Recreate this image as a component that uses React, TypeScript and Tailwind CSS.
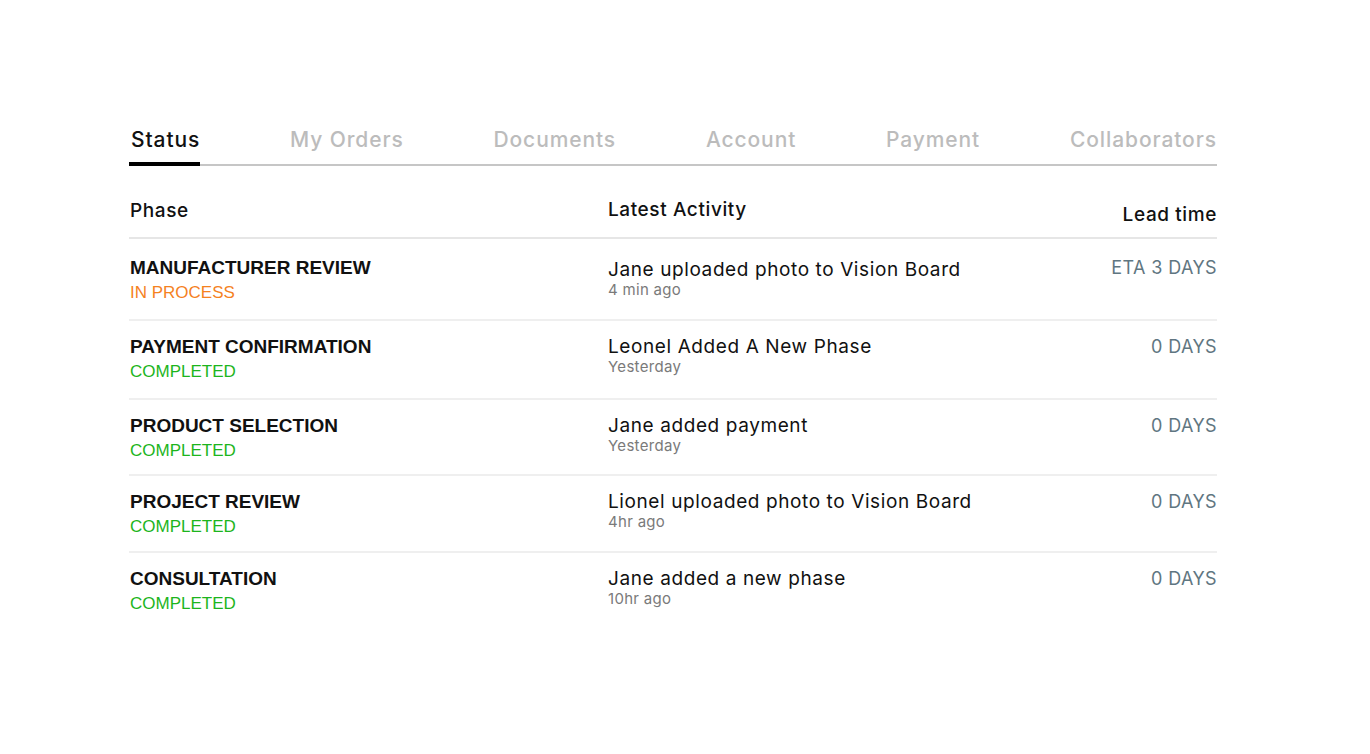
import React from "react";

interface Row {
  phase: string;
  status: "IN PROCESS" | "COMPLETED";
  activity: string;
  when: string;
  lead: string;
  h: string;
  pt: string;
  actPt: string;
}

const tabs = ["Status", "My Orders", "Documents", "Account", "Payment", "Collaborators"];

const rows: Row[] = [
  { phase: "MANUFACTURER REVIEW", status: "IN PROCESS", activity: "Jane uploaded photo to Vision Board", when: "4 min ago", lead: "ETA 3 DAYS", h: "h-[82px]", pt: "pt-[18px]", actPt: "pt-[2px]" },
  { phase: "PAYMENT CONFIRMATION", status: "COMPLETED", activity: "Leonel Added A New Phase", when: "Yesterday", lead: "0 DAYS", h: "h-[79px]", pt: "pt-[15px]", actPt: "pt-0" },
  { phase: "PRODUCT SELECTION", status: "COMPLETED", activity: "Jane added payment", when: "Yesterday", lead: "0 DAYS", h: "h-[76px]", pt: "pt-[15px]", actPt: "pt-0" },
  { phase: "PROJECT REVIEW", status: "COMPLETED", activity: "Lionel uploaded photo to Vision Board", when: "4hr ago", lead: "0 DAYS", h: "h-[77px]", pt: "pt-[15px]", actPt: "pt-0" },
  { phase: "CONSULTATION", status: "COMPLETED", activity: "Jane added a new phase", when: "10hr ago", lead: "0 DAYS", h: "h-[77px]", pt: "pt-[15px]", actPt: "pt-0" },
];

const App: React.FC = () => {
  return (
    <div className="min-h-screen w-full bg-white font-['Inter',sans-serif] pt-[126px]">
      <div className="w-[1088px] ml-[129px]">
        {/* tabs */}
        <div className="flex justify-between border-b-2 border-[#c6c6c6]">
          {tabs.map((t, i) => (
            <div key={t} className="relative pb-[10px] pl-[2px]">
              <span
                className={`text-[21px] leading-[28px] font-medium tracking-[0.9px] ${
                  i === 0 ? "text-[#111]" : "text-[#bcbcbc]"
                }`}
              >
                {t}
              </span>
              {i === 0 && (
                <div className="absolute left-0 right-0 -bottom-[2px] h-[4px] bg-black" />
              )}
            </div>
          ))}
        </div>

        {/* header */}
        <div className="flex items-end h-[73px] pb-[8px] border-b-2 border-[#e6e6e6] text-[19px] tracking-[0.6px] font-medium text-[#111]">
          <div className="w-[479px] pl-[1px] pb-[4px]">Phase</div>
          <div className="flex-1 pb-[5px]">Latest Activity</div>
          <div className="text-right">Lead time</div>
        </div>

        {/* rows */}
        {rows.map((r, i) => (
          <div
            key={r.phase}
            className={`flex ${r.pt} ${r.h} ${i < rows.length - 1 ? "border-b-2 border-[#efefef]" : ""}`}
          >
            <div className="w-[479px] pl-[1px] font-['Liberation_Sans',Arial,sans-serif]">
              <div className="text-[19px] leading-[22px] font-bold text-[#111]">{r.phase}</div>
              <div
                className={`mt-[4px] text-[17px] leading-[20px] ${
                  r.status === "IN PROCESS" ? "text-[#f5821f]" : "text-[#1db51d]"
                }`}
              >
                {r.status}
              </div>
            </div>
            <div className={`flex-1 ${r.actPt}`}>
              <div className="text-[19px] leading-[22px] tracking-[0.6px] text-[#111]">{r.activity}</div>
              <div className="text-[15px] leading-[18px] tracking-[0.3px] text-[#7a7a7a]">{r.when}</div>
            </div>
            <div className="text-right text-[18px] leading-[22px] tracking-[0.4px] text-[#5f7681]">{r.lead}</div>
          </div>
        ))}
      </div>
    </div>
  );
};

export default App;
